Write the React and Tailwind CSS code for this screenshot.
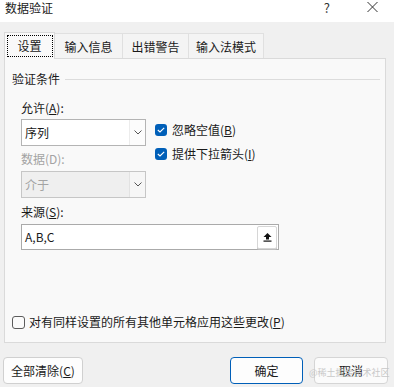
import { useState } from "react";

const font = { fontFamily: '"Noto Sans CJK SC", "Noto Sans", sans-serif' };

function Chevron() {
  return (
    <svg width="8" height="5" viewBox="0 0 8 5" fill="none">
      <path d="M0.5 0.5 L4 4 L7.5 0.5" stroke="#555" strokeWidth="1" />
    </svg>
  );
}

function Check({ checked }) {
  if (!checked) {
    return (
      <span className="w-[13px] h-[13px] rounded-[3px] border border-[#5c5c5c] bg-[#fbfbfb] shrink-0" />
    );
  }
  return (
    <span className="w-[12px] h-[12px] rounded-[3px] bg-[#005fb8] flex items-center justify-center shrink-0">
      <svg width="8" height="6" viewBox="0 0 8 6" fill="none">
        <path d="M0.8 3 L3 5 L7.2 0.8" stroke="#fff" strokeWidth="1.1" />
      </svg>
    </span>
  );
}

function Select({ value, disabled }) {
  return (
    <div
      className={`w-[125px] h-[27px] flex border ${
        disabled ? "border-[#c6c6c6] bg-[#efefef]" : "border-[#b4b4b4] bg-white"
      }`}
    >
      <div
        className={`flex-1 flex items-center pl-[3px] ${
          disabled ? "text-[#a3a3a3]" : "text-[#1a1a1a]"
        }`}
      >
        {value}
      </div>
      <div
        className={`w-[16px] flex items-center justify-center border-l ${
          disabled ? "border-[#e2e2e2] bg-[#f6f6f6]" : "border-[#ececec] bg-[#fcfcfc]"
        }`}
      >
        <Chevron />
      </div>
    </div>
  );
}

export default function App() {
  const [ignoreBlank, setIgnoreBlank] = useState(true);
  const [dropdown, setDropdown] = useState(true);

  const tabs = [
    { label: "输入信息", w: "w-[68px]" },
    { label: "出错警告", w: "w-[66px]" },
    { label: "输入法模式", w: "w-[75px]" },
  ];

  return (
    <div
      className="w-[394px] h-[387px] bg-[#f0f0f0] text-[12px] leading-[14px] text-[#1a1a1a] overflow-hidden relative"
      style={font}
    >
      {/* title bar */}
      <div className="h-[22px] bg-white flex items-start">
        <span className="ml-[5px] mt-[1px] text-[12px] leading-[14px]">数据验证</span>
        <span className="ml-auto mt-[1px] text-[13px] leading-[14px] text-[#333]">?</span>
        <span className="ml-[37px] mr-[16px] mt-[2px]">
          <svg width="11" height="10" viewBox="0 0 11 10">
            <path d="M0.5 0 L10.5 10 M10.5 0 L0.5 10" stroke="#333" strokeWidth="1" />
          </svg>
        </span>
      </div>

      {/* tabs */}
      <div className="h-[36px] flex items-end pl-[4px]">
        <div className="w-[51px] h-[27px] bg-[#f9f9f9] border border-b-0 border-[#d9d9d9] flex items-start justify-center pt-[2px] relative z-10 mb-[-1px]">
          <div className="w-[46px] h-[22px] border border-dotted border-black flex items-center justify-center">
            设置
          </div>
        </div>
        {tabs.map((t) => (
          <div
            key={t.label}
            className={`${t.w} h-[25px] bg-[#f4f4f4] border border-l-0 border-b-0 border-[#e0e0e0] flex items-center justify-center pt-[2px]`}
          >
            {t.label}
          </div>
        ))}
      </div>

      {/* panel */}
      <div className="ml-[4px] w-[382px] h-[285px] bg-[#f9f9f9] border border-[#dadada] flex flex-col">
        <div className="mt-[13px] h-[14px] flex items-center pl-[7px] pr-[5px]">
          <span>验证条件</span>
          <span className="flex-1 ml-[5px] h-px bg-[#dcdcdc]" />
        </div>

        <div className="pl-[16px] flex gap-[9px]">
          <div className="flex flex-col">
            <div className="mt-[15px] h-[14px]">
              允许(<span className="underline">A</span>):
            </div>
            <div className="mt-[4px]">
              <Select value="序列" />
            </div>
            <div className="mt-[6px] h-[14px] text-[#a3a3a3]">数据(D):</div>
            <div className="mt-[5px]">
              <Select value="介于" disabled />
            </div>
          </div>
          <div className="flex flex-col pt-[37px] gap-[10px]">
            <button
              onClick={() => setIgnoreBlank(!ignoreBlank)}
              className="h-[14px] flex items-center gap-[5px]"
            >
              <Check checked={ignoreBlank} />
              <span>
                忽略空值(<span className="underline">B</span>)
              </span>
            </button>
            <button
              onClick={() => setDropdown(!dropdown)}
              className="h-[14px] flex items-center gap-[5px]"
            >
              <Check checked={dropdown} />
              <span>
                提供下拉箭头(<span className="underline">I</span>)
              </span>
            </button>
          </div>
        </div>

        <div className="pl-[16px] mt-[7px] h-[14px]">
          来源(<span className="underline">S</span>):
        </div>
        <div className="ml-[16px] mt-[5px] w-[258px] h-[26px] bg-white border border-[#aaaaaa] flex items-center">
          <span className="flex-1 pl-[3px]">A,B,C</span>
          <div className="w-[20px] h-[23px] mr-[1px] bg-white border border-[#d6d6d6] rounded-[2px] shadow-[0_1px_0_#bdbdbd] flex items-center justify-center">
            <svg width="9" height="9" viewBox="0 0 9 9">
              <path d="M4.5 0 L8.5 4 L6 4 L6 6.5 L3 6.5 L3 4 L0.5 4 Z" fill="#111" />
              <rect x="0.5" y="7.5" width="8" height="1.2" fill="#111" />
            </svg>
          </div>
        </div>

        <div className="mt-auto mb-[13px] pl-[7px] h-[14px] flex items-center gap-[4px]">
          <Check checked={false} />
          <span>
            对有同样设置的所有其他单元格应用这些更改(<span className="underline">P</span>)
          </span>
        </div>
      </div>

      {/* buttons */}
      <div className="mt-[14px] flex items-center pl-[3px] pr-[6px]">
        <button className="w-[80px] h-[27px] rounded-[4px] border border-[#d0d0d0] bg-[#fdfdfd]">
          全部清除(<span className="underline">C</span>)
        </button>
        <button className="ml-auto w-[73px] h-[27px] rounded-[4px] border border-[#005fb8] bg-[#fdfdfd]">
          确定
        </button>
        <button className="ml-[11px] w-[74px] h-[27px] rounded-[4px] border border-[#d5d5d5] bg-[#fbfbfb]">
          取消
        </button>
      </div>

      {/* watermark */}
      <span className="absolute left-[309px] top-[367px] text-[9px] leading-[11px] text-[#c4c4c4] opacity-90 pointer-events-none">
        @稀土掘金技术社区
      </span>
    </div>
  );
}
